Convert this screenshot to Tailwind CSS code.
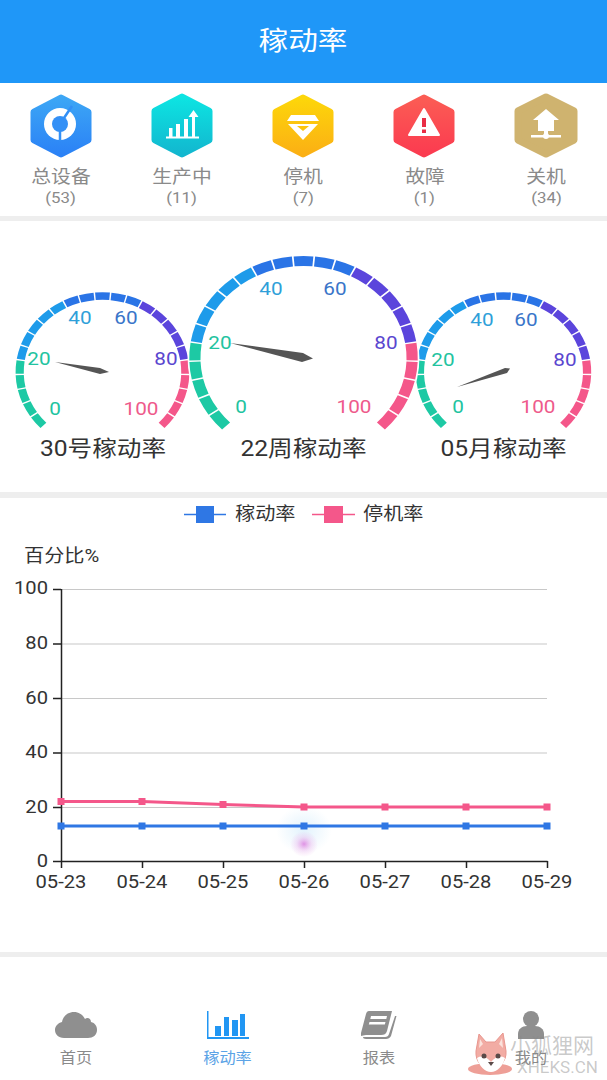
<!DOCTYPE html>
<html lang="zh">
<head>
<meta charset="utf-8">
<script src="https://cdn.jsdelivr.net/npm/@tailwindcss/browser@4"></script>
</head>
<body class="bg-white">
<div class="relative w-[607px] h-[1080px] overflow-hidden bg-white font-['Roboto','Noto_Sans_CJK_SC',sans-serif]">
  <header class="h-[83px] bg-[#1f97f8] flex items-center justify-center text-white text-[26px]"><span class="scale-x-[1.14]">稼动率</span></header>

  <section class="h-[133px] grid grid-cols-5 pt-[10px] bg-white">
    <div class="flex flex-col items-center">
      <svg width="66" height="66" viewBox="0 0 66 66"><defs><linearGradient id="g1" x1="0" y1="0" x2="0" y2="1"><stop offset="0" stop-color="#3ca6f5"/><stop offset="1" stop-color="#2b82f6"/></linearGradient></defs>
        <polygon points="33,5 60,19 60,47 33,61 6,47 6,19" fill="url(#g1)" stroke="url(#g1)" stroke-width="7" stroke-linejoin="round"/>
        <circle cx="32" cy="31" r="16" fill="#fff"/><circle cx="32" cy="31" r="8" fill="#3390f6"/>
        <path d="M32 38 V48 M36 25 L44 13" stroke="#3390f6" stroke-width="2.500"/>
      </svg>
      <span class="text-[18px] leading-[22px] text-[#8a8a8a] mt-[7px] scale-x-[1.1]">总设备</span><span class="text-[15px] leading-[20px] text-[#8a8a8a] scale-x-[1.12]">(53)</span>
    </div>
    <div class="flex flex-col items-center">
      <svg width="66" height="66" viewBox="0 0 66 66"><defs><linearGradient id="g2" x1="0" y1="0" x2="0" y2="1"><stop offset="0" stop-color="#0de4e2"/><stop offset="1" stop-color="#12b7cf"/></linearGradient></defs>
        <polygon points="33,4 60,18 60,47 33,61 6,47 6,18" fill="url(#g2)" stroke="url(#g2)" stroke-width="7" stroke-linejoin="round"/>
        <path d="M17 45.500 H50 V43.500 H17 Z M20 43.500 H23.500 V35 H20 Z M27 43.500 H31 V31 H27 Z M35 43.500 H39 V26 H35 Z M43 43.500 H46 V24 H49.500 L44.500 17 L39.500 24 H43 Z" fill="#fff"/>
      </svg>
      <span class="text-[18px] leading-[22px] text-[#8a8a8a] mt-[7px] scale-x-[1.1]">生产中</span><span class="text-[15px] leading-[20px] text-[#8a8a8a] scale-x-[1.12]">(11)</span>
    </div>
    <div class="flex flex-col items-center">
      <svg width="66" height="66" viewBox="0 0 66 66"><defs><linearGradient id="g3" x1="0" y1="0" x2="0" y2="1"><stop offset="0" stop-color="#fdd60a"/><stop offset="1" stop-color="#fbb014"/></linearGradient></defs>
        <polygon points="33,5 60,19 60,47 33,61 6,47 6,19" fill="url(#g3)" stroke="url(#g3)" stroke-width="7" stroke-linejoin="round"/>
        <path d="M21 22 H45 L49 28 H17 Z M18 31 H48 L33 47 Z" fill="#fff"/><path d="M27 33 H39 L33 38 Z" fill="#fcc50f"/>
      </svg>
      <span class="text-[18px] leading-[22px] text-[#8a8a8a] mt-[7px] scale-x-[1.1]">停机</span><span class="text-[15px] leading-[20px] text-[#8a8a8a] scale-x-[1.12]">(7)</span>
    </div>
    <div class="flex flex-col items-center">
      <svg class="ml-[-2px]" width="66" height="66" viewBox="0 0 66 66"><defs><linearGradient id="g4" x1="0" y1="0" x2="0" y2="1"><stop offset="0" stop-color="#fb5c54"/><stop offset="1" stop-color="#fb3b50"/></linearGradient></defs>
        <polygon points="33,5 60,19 60,47 33,61 6,47 6,19" fill="url(#g4)" stroke="url(#g4)" stroke-width="7" stroke-linejoin="round"/>
        <path d="M33 16 L48 42 H18 Z" fill="#fff" stroke="#fff" stroke-width="2" stroke-linejoin="round"/><rect x="31" y="25" width="4" height="9" fill="#e92d45"/><rect x="31" y="36.500" width="4" height="3.500" fill="#e92d45"/>
      </svg>
      <span class="text-[18px] leading-[22px] text-[#8a8a8a] mt-[7px] scale-x-[1.1]">故障</span><span class="text-[15px] leading-[20px] text-[#8a8a8a] scale-x-[1.12]">(1)</span>
    </div>
    <div class="flex flex-col items-center">
      <svg width="68" height="66" viewBox="0 0 68 66">
        <polygon points="34,4 62,18 62,47 34,61 6,47 6,18" fill="#cfb36f" stroke="#cfb36f" stroke-width="7" stroke-linejoin="round"/>
        <path d="M34 16 L47 27 H42 V38 H26 V27 H21 Z" fill="#fff"/><rect x="32" y="38" width="4" height="5" fill="#fff"/><rect x="19" y="42" width="30" height="2.500" fill="#fff"/><circle cx="34" cy="43" r="3" fill="#fff"/>
      </svg>
      <span class="text-[18px] leading-[22px] text-[#8a8a8a] mt-[7px] scale-x-[1.1]">关机</span><span class="text-[15px] leading-[20px] text-[#8a8a8a] scale-x-[1.12]">(34)</span>
    </div>
  </section>

  <div class="h-[5px] bg-[#eeeeee]"></div>

  <section class="h-[271px]">
    <svg id="gauges" class="block" width="607" height="271" viewBox="0 221 607 271">
      <g id="ring-left"></g><g id="ring-right"></g><g id="ring-big"></g>
      <g font-size="18.500" text-anchor="middle">
        <text x="55" y="415.500" fill="#22c3a0">0</text><text x="39" y="365.500" fill="#22c3a0">20</text><text x="80" y="324.500" fill="#2f9fd9">40</text><text x="126" y="324.500" fill="#3a75c9">60</text><text x="166" y="365.500" fill="#5a46cf">80</text><text x="141" y="415.500" fill="#ee5a8b">100</text>
        <text x="458" y="413.500" fill="#22c3a0">0</text><text x="443" y="366.500" fill="#22c3a0">20</text><text x="482" y="326.500" fill="#2f9fd9">40</text><text x="526" y="326.500" fill="#3a75c9">60</text><text x="565" y="366.500" fill="#5a46cf">80</text><text x="538" y="413.500" fill="#ee5a8b">100</text>
        <text x="241" y="413.500" fill="#22c3a0">0</text><text x="220" y="349.500" fill="#22c3a0">20</text><text x="271" y="295.500" fill="#2f9fd9">40</text><text x="335" y="295.500" fill="#3a75c9">60</text><text x="386" y="349.500" fill="#5a46cf">80</text><text x="354" y="413.500" fill="#ee5a8b">100</text>
      </g>
      <g fill="#555555">
        <polygon points="55,362 100,368 109,372 100,374"/>
        <polygon points="230,343 303,353 313,358.500 302,362"/>
        <polygon points="457,387 505,368 510,368.500 507,373"/>
      </g>
      <g font-size="22" text-anchor="middle" fill="#333333">
        <text x="103" y="456">30号稼动率</text><text x="303.500" y="456">22周稼动率</text><text x="503.500" y="456">05月稼动率</text>
      </g>
    </svg>
  </section>

  <div class="h-[6px] bg-[#eeeeee]"></div>

  <section class="h-[454px]">
    <svg class="block" width="607" height="454" viewBox="0 498 607 454">
      <defs>
        <radialGradient id="glowA"><stop offset="0" stop-color="#7cc6f2" stop-opacity=".22"/><stop offset="1" stop-color="#7cc6f2" stop-opacity="0"/></radialGradient>
        <radialGradient id="glowB"><stop offset="0" stop-color="#d86fdc" stop-opacity=".75"/><stop offset=".55" stop-color="#e7a5e8" stop-opacity=".3"/><stop offset="1" stop-color="#e7a5e8" stop-opacity="0"/></radialGradient>
      </defs>
      <path d="M184 514.500 H226" stroke="#2f77e4" stroke-width="1.500"/><rect x="196" y="506" width="18" height="17" fill="#2f77e4"/>
      <path d="M312 514.500 H355" stroke="#f4578a" stroke-width="1.500"/><rect x="324" y="506" width="19" height="17" fill="#f4578a"/>
      <g font-size="18" fill="#333333">
        <text x="235" y="520">稼动率</text><text x="363" y="520">停机率</text>
        <text x="24" y="562">百分比%</text>
      </g>
      <ellipse cx="304" cy="830" rx="28" ry="24" fill="url(#glowA)"/>
      <ellipse cx="304" cy="844" rx="14" ry="13" fill="url(#glowB)"/>
      <g stroke="#c8c8c8" stroke-width="1.200">
        <path d="M61 589.500 H547"/><path d="M61 644 H547"/><path d="M61 698.500 H547"/><path d="M61 753 H547"/><path d="M61 807.500 H547"/>
      </g>
      <path d="M61.500 589 V861.500 H547.500 M53 589.500 H61 M53 644 H61 M53 698.500 H61 M53 753 H61 M53 807.500 H61 M53 861.500 H61 M61.500 861 V868 M142.500 861 V868 M223.500 861 V868 M304.500 861 V868 M385.500 861 V868 M466.500 861 V868 M547.500 861 V868" fill="none" stroke="#222222" stroke-width="1.500"/>
      <g font-size="18" fill="#333333" text-anchor="end">
        <text x="48" y="594">100</text><text x="48" y="649">80</text><text x="48" y="704">60</text><text x="48" y="758">40</text><text x="48" y="813">20</text><text x="48" y="867">0</text>
      </g>
      <g font-size="18" fill="#333333" text-anchor="middle">
        <text x="61" y="888">05-23</text><text x="142" y="888">05-24</text><text x="223" y="888">05-25</text><text x="304" y="888">05-26</text><text x="385" y="888">05-27</text><text x="466" y="888">05-28</text><text x="547" y="888">05-29</text>
      </g>
      <path d="M61 826 H547" stroke="#2f77e4" stroke-width="3"/>
      <path d="M61 801.500 L142 801.500 L223 804.500 L304 807 H547" fill="none" stroke="#f4578a" stroke-width="3"/>
      <g fill="#2f77e4"><rect x="57.500" y="822.500" width="7" height="7"/><rect x="138.500" y="822.500" width="7" height="7"/><rect x="219.500" y="822.500" width="7" height="7"/><rect x="300.500" y="822.500" width="7" height="7"/><rect x="381.500" y="822.500" width="7" height="7"/><rect x="462.500" y="822.500" width="7" height="7"/><rect x="543.500" y="822.500" width="7" height="7"/></g>
      <g fill="#f4578a"><rect x="57.500" y="798" width="7" height="7"/><rect x="138.500" y="798" width="7" height="7"/><rect x="219.500" y="801" width="7" height="7"/><rect x="300.500" y="803.500" width="7" height="7"/><rect x="381.500" y="803.500" width="7" height="7"/><rect x="462.500" y="803.500" width="7" height="7"/><rect x="543.500" y="803.500" width="7" height="7"/></g>
    </svg>
  </section>

  <div class="h-[5px] bg-[#eeeeee]"></div>

  <nav class="h-[123px] grid grid-cols-4 pt-[54px] text-[15px] leading-[20px] text-[#8a8a8a]">
    <div class="flex flex-col items-center gap-[9px]">
      <svg width="42" height="28" viewBox="0 0 42 28" fill="#8f8f8f"><path d="M9 27 C3 27 0 23 0 19 C0 15 3 12 7 11 C8 5 13 1 19 1 C24 1 28 4 30 8 C32 6 36 7 36 11 C40 12 42 15 42 19 C42 24 38 27 33 27 Z"/></svg>
      <span class="scale-x-[1.08]">首页</span>
    </div>
    <div class="flex flex-col items-center gap-[9px] text-[#5ba3e6]">
      <svg width="42" height="28" viewBox="0 0 42 28" fill="#2196f3"><path d="M0 0 H1.500 V26 H42 V28 H0 Z"/><rect x="8" y="15" width="6" height="10"/><rect x="17" y="6" width="5" height="19"/><rect x="25" y="9" width="6" height="16"/><rect x="33" y="3" width="5" height="22"/></svg>
      <span class="scale-x-[1.08]">稼动率</span>
    </div>
    <div class="flex flex-col items-center gap-[9px]">
      <svg width="36" height="28" viewBox="0 0 36 28" fill="#8f8f8f"><path d="M8 0 H31 L26 20 C25 23 23 24 20 24 H5 C1 24 -1 27 0 22 L5 3 C5.500 1 6.500 0 8 0 Z"/><path d="M10 5 H26 L25.300 8 H9.300 Z M8.500 11 H24.500 L23.800 13.500 H7.800 Z" fill="#fff"/><path d="M34 5 H35.500 L30 25 C29 27 27 28 25 28 H5 C3 28 2 27 2 26 H24 C26 26 27.500 25 28 23 Z"/></svg>
      <span class="scale-x-[1.08]">报表</span>
    </div>
    <div class="flex flex-col items-center gap-[9px]">
      <svg width="28" height="28" viewBox="0 0 28 28" fill="#8f8f8f"><ellipse cx="14" cy="8" rx="8" ry="8"/><path d="M1 28 V23 C1 18 5 15 10 15 H18 C23 15 27 18 27 23 V28 Z"/></svg>
      <span class="scale-x-[1.08]">我的</span>
    </div>
  </nav>

  <div class="absolute left-[468px] top-[1031px] w-[134px] h-[46px]">
    <svg class="absolute left-0 top-0" width="46" height="46" viewBox="0 0 46 46">
      <ellipse cx="22" cy="38" rx="22" ry="6" fill="#ee9f97"/>
      <path d="M11 3 L18 11 H27 L35 2 L38 20 C39 30 31 38 23 38 C14 38 7 30 8 20 Z" fill="#f2aca4" stroke="#e8968e" stroke-width="1"/>
      <path d="M12 8 L15 13 L11 17 Z M34 7 L31 13 L35 17 Z" fill="#fbe2dc"/>
      <path d="M9 27 C14 24 19 26 23 31 C27 26 32 24 37 27 C35 35 29 41 23 41 C17 41 11 35 9 27 Z" fill="#fff"/>
      <circle cx="16" cy="25" r="2.500" fill="#5a4a48"/><circle cx="30" cy="25" r="2.500" fill="#5a4a48"/>
      <path d="M20 31 H26 L23 35 Z" fill="#5a4a48"/>
    </svg>
    <span class="absolute left-[42px] top-[3px] text-[21px] leading-[24px] text-[#888888]/45 whitespace-nowrap">小狐狸网</span>
    <span class="absolute left-[49px] top-[26px] text-[17px] leading-[20px] text-[#888888]/45 whitespace-nowrap">XHEKS.CN</span>
  </div>
</div>
<script>
  function seg(el, cx, cy, sx, r, w, sepDeg) {
    var colors = ['#1dc9a4', '#1e9bea', '#2a74e6', '#5b45dc', '#f4578a'];
    var out = '';
    for (var i = 0; i < 25; i++) {
      var a0 = 225 - i * 10.8 - sepDeg / 2, a1 = a0 - 10.8 + sepDeg;
      var rad0 = a0 * Math.PI / 180, rad1 = a1 * Math.PI / 180;
      var d = 'M' + (r * Math.cos(rad0)).toFixed(2) + ' ' + (-r * Math.sin(rad0)).toFixed(2) +
              ' A' + r + ' ' + r + ' 0 0 1 ' + (r * Math.cos(rad1)).toFixed(2) + ' ' + (-r * Math.sin(rad1)).toFixed(2);
      out += '<path d="' + d + '" fill="none" stroke="' + colors[Math.floor(i / 5)] + '" stroke-width="' + w + '"/>';
    }
    el.setAttribute('transform', 'translate(' + cx + ' ' + cy + ') scale(' + sx + ' 1)');
    el.innerHTML = '<circle r="' + (r + w / 2 + 1.5) + '" fill="#fff"/>' + out;
  }
  seg(document.getElementById('ring-left'), 102.5, 372, 1.09, 76, 7.5, 1);
  seg(document.getElementById('ring-right'), 503.5, 372, 1.1, 76, 7.5, 1);
  seg(document.getElementById('ring-big'), 303.5, 358, 1.12, 97, 10, 0.9);
  /* the reference's text is stretched sideways, as the whole screenshot is */
  document.querySelectorAll('svg text').forEach(function (t) {
    var x = t.getAttribute('x');
    t.setAttribute('transform', 'translate(' + x + ' 0) scale(1.12 1) translate(' + (-x) + ' 0)');
  });
</script>
</body>
</html>
